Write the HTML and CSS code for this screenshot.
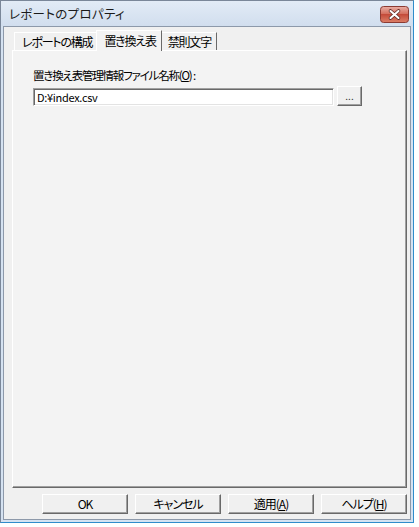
FILE: index.html
```html
<!DOCTYPE html>
<html lang="ja">
<head>
<meta charset="utf-8">
<title>レポートのプロパティ</title>
<link rel="stylesheet" href="styles.css">
</head>
<body>
<div class="window">
  <div class="titlebar">
    <span class="title">レポートのプロパティ</span>
    <span class="close">
      <svg width="29" height="17" viewBox="0 0 29 17">
        <defs>
          <linearGradient id="rg" x1="0" y1="0" x2="0" y2="1">
            <stop offset="0" stop-color="#eab0a6"/>
            <stop offset="0.45" stop-color="#d4705f"/>
            <stop offset="0.5" stop-color="#c44b3a"/>
            <stop offset="1" stop-color="#dc8068"/>
          </linearGradient>
        </defs>
        <rect x="0.5" y="0.5" width="28" height="16" rx="3" fill="url(#rg)" stroke="#8b3b33"/>
        <path d="M10.5 5 L18.5 12 M18.5 5 L10.5 12" stroke="#5b2a24" stroke-width="3.6" stroke-linecap="round"/>
        <path d="M10.5 5 L18.5 12 M18.5 5 L10.5 12" stroke="#ffffff" stroke-width="2.1" stroke-linecap="round"/>
      </svg>
    </span>
  </div>
  <div class="client">
    <div class="tabs">
      <div class="tab">レポートの構成</div>
      <div class="tab active">置き換え表</div>
      <div class="tab">禁則文字</div>
    </div>
    <div class="panel">
      <div class="label">置き換え表管理情報ファイル名称(<u>O</u>) :</div>
      <div class="field-row">
        <div class="input">D:¥index.csv</div>
        <div class="btn browse">...</div>
      </div>
    </div>
    <div class="buttons">
      <div class="btn">OK</div>
      <div class="btn">キャンセル</div>
      <div class="btn">適用(<u>A</u>)</div>
      <div class="btn">ヘルプ(<u>H</u>)</div>
    </div>
  </div>
</div>
</body>
</html>
```

FILE: styles.css
```css
html, body {
  margin: 0;
  padding: 0;
  background: #ffffff;
}

body {
  font-family: "Noto Sans CJK JP", "Liberation Sans", sans-serif;
  font-size: 12px;
  color: #000;
  font-feature-settings: "palt";
}

.window {
  width: 414px;
  height: 523px;
  box-sizing: border-box;
  border: 1px solid #7a8799;
  border-right-color: #2f8ccb;
  border-bottom-color: #2f8ccb;
  background: #d5e2f1;
  display: flex;
  flex-direction: column;
  padding: 0 2px 2px 2px;
}

.titlebar {
  height: 25px;
  display: flex;
  align-items: flex-start;
  background: linear-gradient(to bottom, #e2ebf6, #d1deee);
  margin: 0 -2px;
  padding-left: 8px;
  padding-right: 4px;
}

.title {
  line-height: 26px;
  font-size: 12.5px;
  color: #1a1a1a;
  letter-spacing: 0.3px;
}

.close {
  margin-left: auto;
  margin-top: 5px;
  display: block;
  height: 17px;
}

.close svg {
  display: block;
}

.client {
  flex: 1;
  background: #f0f0f0;
  border: 1px solid #8d99aa;
  display: flex;
  flex-direction: column;
  padding: 3px 3px 5px 8px;
}

.tabs {
  display: flex;
  height: 20px;
  padding-left: 2px;
  position: relative;
  z-index: 1;
}

.tab {
  margin-top: 2px;
  height: 18px;
  box-sizing: border-box;
  padding: 0 5px 0 7px;
  border-top: 1px solid #ffffff;
  border-left: 1px solid #ffffff;
  border-right: 1px solid #696969;
  line-height: 17px;
  letter-spacing: -1.2px;
  background: #f0f0f0;
  white-space: nowrap;
}

.tab.active {
  margin-top: 0;
  height: 21px;
  margin-bottom: -1px;
  margin-left: -2px;
  margin-right: -2px;
  padding: 0 5px 0 7px;
  line-height: 19px;
  position: relative;
  z-index: 2;
  background: #f3f3f3;
}

.panel {
  flex: 1;
  background: #f3f3f3;
  border-top: 1px solid #ffffff;
  border-left: 1px solid #ffffff;
  border-right: 1px solid #696969;
  border-bottom: 1px solid #696969;
  box-shadow: inset -1px -1px 0 #a0a0a0;
  padding: 17px 20px 0 20px;
}

.label {
  line-height: 15px;
  white-space: nowrap;
  font-size: 11.5px;
  letter-spacing: -1.2px;
}

.field-row {
  display: flex;
  align-items: flex-end;
  margin-top: 3px;
}

.input {
  width: 301px;
  height: 18px;
  box-sizing: border-box;
  border: 1px solid;
  border-color: #a0a0a0 #ffffff #ffffff #a0a0a0;
  box-shadow: inset 1px 1px 0 #696969, inset -1px -1px 0 #e3e3e3;
  background: #ffffff;
  padding-left: 3px;
  line-height: 16px;
  font-size: 11px;
  letter-spacing: -0.3px;
  font-feature-settings: normal;
}

.btn {
  width: 86px;
  height: 20px;
  box-sizing: border-box;
  border: 1px solid;
  border-color: #ffffff #696969 #696969 #ffffff;
  box-shadow: inset -1px -1px 0 #a0a0a0;
  background: #f0f0f0;
  display: flex;
  align-items: center;
  justify-content: center;
  line-height: 16px;
  letter-spacing: -1px;
}

.btn.browse {
  width: 25px;
  margin-left: 3px;
  font-size: 10px;
  letter-spacing: 0;
  color: #333;
}

.buttons {
  display: flex;
  justify-content: flex-end;
  gap: 7px;
  margin-top: 6px;
}
```
